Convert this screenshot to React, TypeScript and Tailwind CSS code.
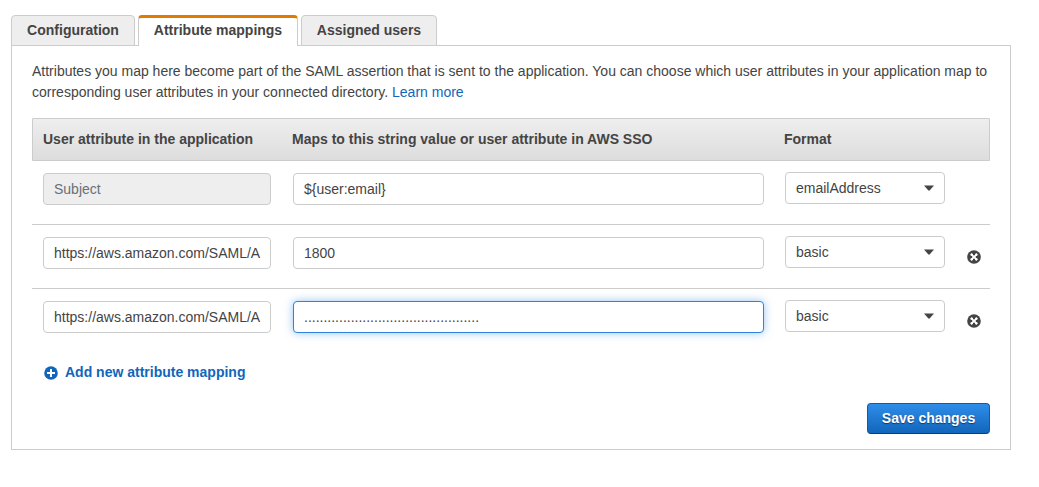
import { useState } from "react";

type Mapping = {
  attribute: string;
  value: string;
  format: string;
  locked?: boolean;
  focused?: boolean;
};

const mappings: Mapping[] = [
  { attribute: "Subject", value: "${user:email}", format: "emailAddress", locked: true },
  { attribute: "https://aws.amazon.com/SAML/A", value: "1800", format: "basic" },
  {
    attribute: "https://aws.amazon.com/SAML/A",
    value: ".............................................",
    format: "basic",
    focused: true,
  },
];

const tabs = [
  { label: "Configuration", width: "w-[124px]" },
  { label: "Attribute mappings", width: "w-[160px]" },
  { label: "Assigned users", width: "w-[136px]" },
];

function RemoveIcon() {
  return (
    <svg width="14" height="14" viewBox="0 0 14 14" aria-hidden="true">
      <circle cx="7" cy="7" r="6.8" fill="#444" />
      <path
        d="M4.7 3L6 4.3V5.2H8V4.3L9.3 3L11 4.7L9.7 6H8.8V8H9.7L11 9.3L9.3 11L8 9.7V8.8H6V9.7L4.7 11L3 9.3L4.3 8H5.2V6H4.3L3 4.7Z"
        fill="#fff"
      />
    </svg>
  );
}

function AddIcon() {
  return (
    <svg width="14" height="14" viewBox="0 0 14 14" aria-hidden="true">
      <circle cx="7" cy="7" r="6.8" fill="#1166bb" />
      <path d="M7 3v8M3 7h8" stroke="#fff" strokeWidth="2" />
    </svg>
  );
}

function Caret() {
  return (
    <svg width="10" height="6" viewBox="0 0 10 6" aria-hidden="true">
      <path d="M0 0.5h10L5.6 5.6H4.4z" fill="#444" />
    </svg>
  );
}

function MappingRow({ row, last }: { row: Mapping; last: boolean }) {
  return (
    <div className={`flex h-16 items-start pl-[11px] ${last ? "" : "border-b border-[#ccc]"}`}>
      <div
        className={`mt-3 flex h-8 w-[228px] items-center overflow-hidden rounded-[4px] border border-[#ccc] px-[10px] whitespace-nowrap ${
          row.locked ? "bg-[#eee] text-[#687078]" : "bg-white"
        }`}
      >
        {row.attribute}
      </div>
      <div
        className={`mt-3 ml-[22px] flex h-8 w-[471px] items-center rounded-[4px] border bg-white px-[10px] ${
          row.focused ? "border-[#2e83dc] shadow-[0_0_8px_rgba(46,139,232,0.5)]" : "border-[#ccc]"
        }`}
      >
        {row.value}
      </div>
      <div className="mt-[11px] ml-[21px] flex h-8 w-40 items-center justify-between rounded-[4px] border border-[#ccc] bg-white px-[10px]">
        <span>{row.format}</span>
        <Caret />
      </div>
      {!row.locked && (
        <button className="mt-[25px] ml-[22px]" aria-label="Remove mapping">
          <RemoveIcon />
        </button>
      )}
    </div>
  );
}

export default function App() {
  const [active, setActive] = useState(1);

  return (
    <div className="h-[487px] w-[1039px] bg-white pt-[15px] pl-[11px] font-['Liberation_Sans',Arial,sans-serif] text-sm text-[#444]">
      <div className="flex h-[31px] gap-[3px]">
        {tabs.map((tab, i) => (
          <button
            key={tab.label}
            onClick={() => setActive(i)}
            className={`relative h-[31px] rounded-t-[4px] font-bold whitespace-nowrap ${tab.width} ${
              i === active
                ? "z-10 border-x border-t-[3px] border-x-[#ccc] border-t-[#e07b00] bg-white pb-1"
                : "border border-[#ccc] bg-[#eee] pb-[2px]"
            }`}
          >
            {tab.label}
          </button>
        ))}
      </div>
      <div className="-mt-px flex h-[405px] w-[1000px] flex-col border border-[#ccc] px-5 pt-[15px]">
        <p className="h-[42px] leading-[21px]">
          Attributes you map here become part of the SAML assertion that is sent to the application. You can
          choose which user attributes in your application map to corresponding user attributes in your
          connected directory.{" "}
          <a href="#" className="text-[#1166bb]">
            Learn more
          </a>
        </p>
        <div className="mt-[15px] flex h-[43px] shrink-0 items-center rounded-t-[1px] border border-[#ccc] bg-linear-to-b from-[#eee] to-[#ddd] pb-[2px] pl-[10px] font-bold">
          <div className="w-[249px]">User attribute in the application</div>
          <div className="w-[492px]">Maps to this string value or user attribute in AWS SSO</div>
          <div>Format</div>
        </div>
        {mappings.map((row, i) => (
          <MappingRow key={i} row={row} last={i === mappings.length - 1} />
        ))}
        <button className="mt-[9px] ml-3 flex h-5 items-center gap-[7px] self-start font-bold text-[#1166bb]">
          <span className="pt-[2px]">
            <AddIcon />
          </span>
          Add new attribute mapping
        </button>
        <button className="mt-[21px] h-[31px] w-[123px] self-end rounded-[4px] border border-[#1459a4] border-b-[#0c3f78] bg-linear-to-b from-[#2e8de9] to-[#1166bb] pb-[2px] font-bold text-white [text-shadow:0_1px_1px_#073d73]">
          Save changes
        </button>
      </div>
    </div>
  );
}
